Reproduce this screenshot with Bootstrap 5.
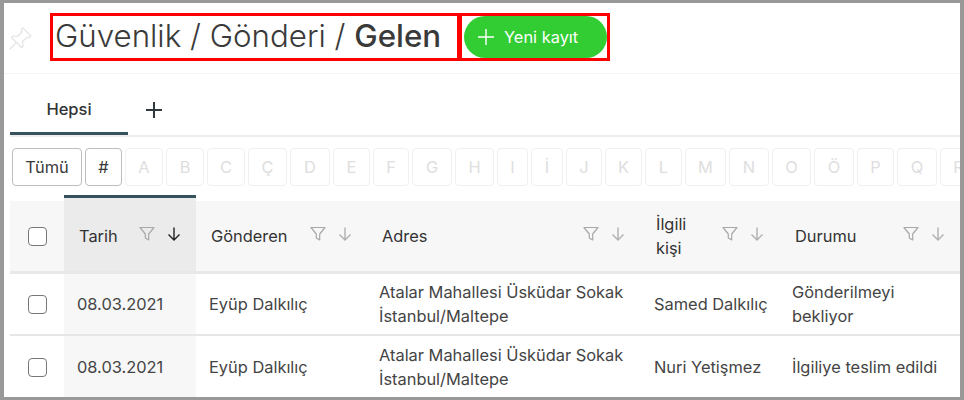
<!DOCTYPE html>
<html lang="tr">

<head>
    <meta charset="UTF-8">
    <meta name="viewport" content="width=device-width, initial-scale=1.0">
    <title>Gelen</title>

    <link href="https://cdn.jsdelivr.net/npm/bootstrap@5.3.0/dist/css/bootstrap.min.css" rel="stylesheet">

    <style>
        html, body {
            height: 400px;
            overflow: hidden;
        }

        body {
            background: #fff;
            font-family: Inter, "Liberation Sans", sans-serif;
            color: #3a3a3a;
        }

        .cerceve {
            height: 400px;
            width: 964px;
            border: solid #999;
            border-width: 3px 4px 3px 4px;
            overflow: hidden;
        }

        .baslik-alani {
            height: 71px;
            padding: 10px 0 0 3px;
            border-bottom: 1px solid #f4f4f4;
        }

        .raptiye {
            width: 43px;
            padding-top: 12px;
            padding-left: 2px;
        }

        .baslik-kutu {
            width: 410px;
            height: 48px;
            border: 3px solid #f00;
            padding-left: 2px;
            font-size: 31.3px;
            font-weight: 300;
            line-height: 40px;
            white-space: nowrap;
        }

        .baslik-kutu b {
            font-weight: 500;
        }

        .buton-kutu {
            width: 150px;
            height: 48px;
            border: 3px solid #f00;
            border-left-width: 2px;
            padding: 0 0 0 2px;
        }

        .yeni-btn {
            width: 143px;
            height: 42px;
            background: #32cd32;
            color: #fff;
            border: 0;
            border-radius: 21px;
            font-size: 16.4px;
            font-weight: 400;
            padding: 0 0 0 13px;
            gap: 9px;
        }

        .sekmeler {
            height: 63px;
            margin: 0 0 0 6px;
            border-bottom: 2px solid #ededed;
        }

        .sekme {
            width: 118px;
            height: 61px;
            margin-bottom: -1px;
            border-bottom: 3px solid #36525c;
            color: #333;
            font-size: 16.5px;
            font-weight: 500;
            text-align: center;
            padding: 24px 0 0 0;
            line-height: 22px;
        }

        .sekme-ekle {
            margin-left: 18px;
            padding-top: 22px;
        }

        .harfler {
            gap: 3px;
            margin: 11px 0 0 8px;
            width: 960px;
        }

        .harf {
            flex: none;
            height: 38px;
            border: 1px solid #f0f0f0;
            border-radius: 4px;
            color: #dedede;
            font-size: 16.4px;
            line-height: 36px;
            text-align: center;
            background: #fff;
        }

        .harf-aktif {
            border-color: #bdbdbd;
            color: #3a3a3a;
        }

        .tablo-alani {
            margin: 9px 0 0 6px;
            width: 950px;
        }

        .gelen-tablo {
            table-layout: fixed;
            width: 950px;
            border-collapse: separate;
            border-spacing: 0;
            font-size: 16.4px;
        }

        .gelen-tablo th {
            height: 79px;
            background: #f7f7f7;
            border-top: 3px solid #fff;
            border-bottom: 3px solid #e8e8e8;
            font-weight: 400;
            color: #333;
            padding: 0;
            line-height: 24px;
            vertical-align: middle;
        }

        .gelen-tablo th.sirali {
            background: #ebebeb;
            border-top: 3px solid #36525c;
            padding-top: 3px;
        }

        .gelen-tablo th:not(.sirali) {
            background-clip: padding-box;
            border-top-width: 6px;
        }

        .gelen-tablo td {
            height: 62px;
            border-bottom: 2px solid #e6e6e6;
            padding: 0;
            line-height: 24px;
            color: #444;
            vertical-align: middle;
        }

        .gelen-tablo tr:last-child td {
            border-bottom: 0;
        }

        .gelen-tablo td.sirali {
            background: #f7f7f7;
        }

        .hucre {
            padding: 0 8px 0 13px;
        }

        .gelen-tablo td:nth-child(4) .hucre {
            padding-left: 12px;
        }

        .gelen-tablo td:nth-child(5) .hucre {
            padding-left: 14px;
            padding-right: 6px;
        }

        .gelen-tablo td:last-child .hucre {
            padding-left: 14px;
            padding-right: 13px;
        }

        .kutucuk {
            display: block;
            width: 19px;
            height: 19px;
            margin: 0 0 0 18px;
            border: 1.5px solid #777;
            border-radius: 4px;
            background: #fff;
        }

        .ikonlar {
            gap: 12px;
            flex: none;
        }
    </style>
</head>

<body>
    <div class="cerceve">
        <!-- Baslik -->
        <div class="baslik-alani d-flex">
            <div class="raptiye">
                <svg width="23" height="23" viewBox="0 0 23 23" fill="none" stroke="#e4e4e4" stroke-width="1.2" stroke-linejoin="round" stroke-linecap="round">
                    <path d="M14 1 22 9 20.500 10.500 18.500 10 13.500 14.500 14 19 12.500 20.500 2.500 10.500 4 9 8.500 9.500 13 4.500 12.500 2.500Z" />
                    <path d="M7.500 15.500 1 22" />
                </svg>
            </div>
            <div class="baslik-kutu">Güvenlik / Gönderi / <b>Gelen</b></div>
            <div class="buton-kutu">
                <button class="btn yeni-btn d-flex align-items-center" type="button">
                    <svg width="18" height="18" viewBox="0 0 18 18" stroke="#fff" stroke-width="1.4"><path d="M9 1v16M1 9h16" /></svg>
                    Yeni kayıt
                </button>
            </div>
        </div>

        <!-- Sekmeler -->
        <div class="sekmeler d-flex">
            <div class="sekme">Hepsi</div>
            <div class="sekme-ekle">
                <svg width="16" height="16" viewBox="0 0 16 16" stroke="#2f3a40" stroke-width="2"><path d="M8 0v16M0 8h16" /></svg>
            </div>
        </div>

        <!-- Harf filtresi -->
        <div class="harfler d-flex" id="harfler"></div>

        <!-- Tablo -->
        <div class="tablo-alani">
            <table class="gelen-tablo">
                <colgroup>
                    <col style="width: 54px">
                    <col style="width: 132px">
                    <col style="width: 171px">
                    <col style="width: 273px">
                    <col style="width: 138px">
                    <col style="width: 182px">
                </colgroup>
                <thead>
                    <tr id="baslik-satir"></tr>
                </thead>
                <tbody id="satirlar"></tbody>
            </table>
        </div>
    </div>

    <script>
        // Harf butonlari (genislik referanstan)
        const harfler = [
            ["Tümü", 70, 1], ["#", 37, 1], ["A", 38], ["B", 38], ["C", 38], ["Ç", 39], ["D", 40], ["E", 37],
            ["F", 36], ["G", 40], ["H", 39], ["I", 31], ["İ", 32], ["J", 36], ["K", 37], ["L", 37],
            ["M", 41], ["N", 40], ["O", 39], ["Ö", 40], ["P", 37], ["Q", 40], ["R", 37]
        ];
        document.getElementById("harfler").innerHTML = harfler.map(h =>
            `<div class="harf${h[2] ? " harf-aktif" : ""}" style="width:${h[1]}px">${h[0]}</div>`).join("");

        const filtre = renk => `<svg width="16" height="16" viewBox="0 0 16 16" fill="none" stroke="${renk}" stroke-width="1.2" stroke-linejoin="round"><path d="M1 1.500h14L9.700 8v6L6.300 12V8z"/></svg>`;
        const ok = renk => `<svg width="14" height="16" viewBox="0 0 14 16" fill="none" stroke="${renk}" stroke-width="1.4"><path d="M7 1.500v12.500M1.500 8.500 7 14l5.500-5.500"/></svg>`;

        // Kolon basliklari
        const kolonlar = [
            { ad: "Tarih", sol: 15, sag: 15, sirali: true },
            { ad: "Gönderen", sol: 15, sag: 15 },
            { ad: "Adres", sol: 15, sag: 15 },
            { ad: "İlgili<br>kişi", sol: 16, sag: 14 },
            { ad: "Durumu", sol: 17, sag: 15 }
        ];
        document.getElementById("baslik-satir").innerHTML = `<th><span class="kutucuk"></span></th>` + kolonlar.map(k =>
            `<th class="${k.sirali ? "sirali" : ""}"><div class="d-flex align-items-center justify-content-between" style="padding:0 ${k.sag}px 0 ${k.sol}px"><span>${k.ad}</span><span class="ikonlar d-flex align-items-center mb-1">${filtre("#a8a8a8")}${ok(k.sirali ? "#222" : "#b0b0b0")}</span></div></th>`
        ).join("");

        // Satirlar
        const satirlar = [
            ["08.03.2021", "Eyüp Dalkılıç", "Atalar Mahallesi Üsküdar Sokak İstanbul/Maltepe", "Samed Dalkılıç", "Gönderilmeyi bekliyor"],
            ["08.03.2021", "Eyüp Dalkılıç", "Atalar Mahallesi Üsküdar Sokak İstanbul/Maltepe", "Nuri Yetişmez", "İlgiliye teslim edildi"]
        ];
        document.getElementById("satirlar").innerHTML = satirlar.map(s =>
            `<tr><td><span class="kutucuk"></span></td>` + s.map((d, i) =>
                `<td class="${i === 0 ? "sirali" : ""}"><div class="hucre">${d}</div></td>`
            ).join("") + `</tr>`
        ).join("");
    </script>

    <script src="https://cdn.jsdelivr.net/npm/bootstrap@5.3.0/dist/js/bootstrap.bundle.min.js"></script>
</body>

</html>
